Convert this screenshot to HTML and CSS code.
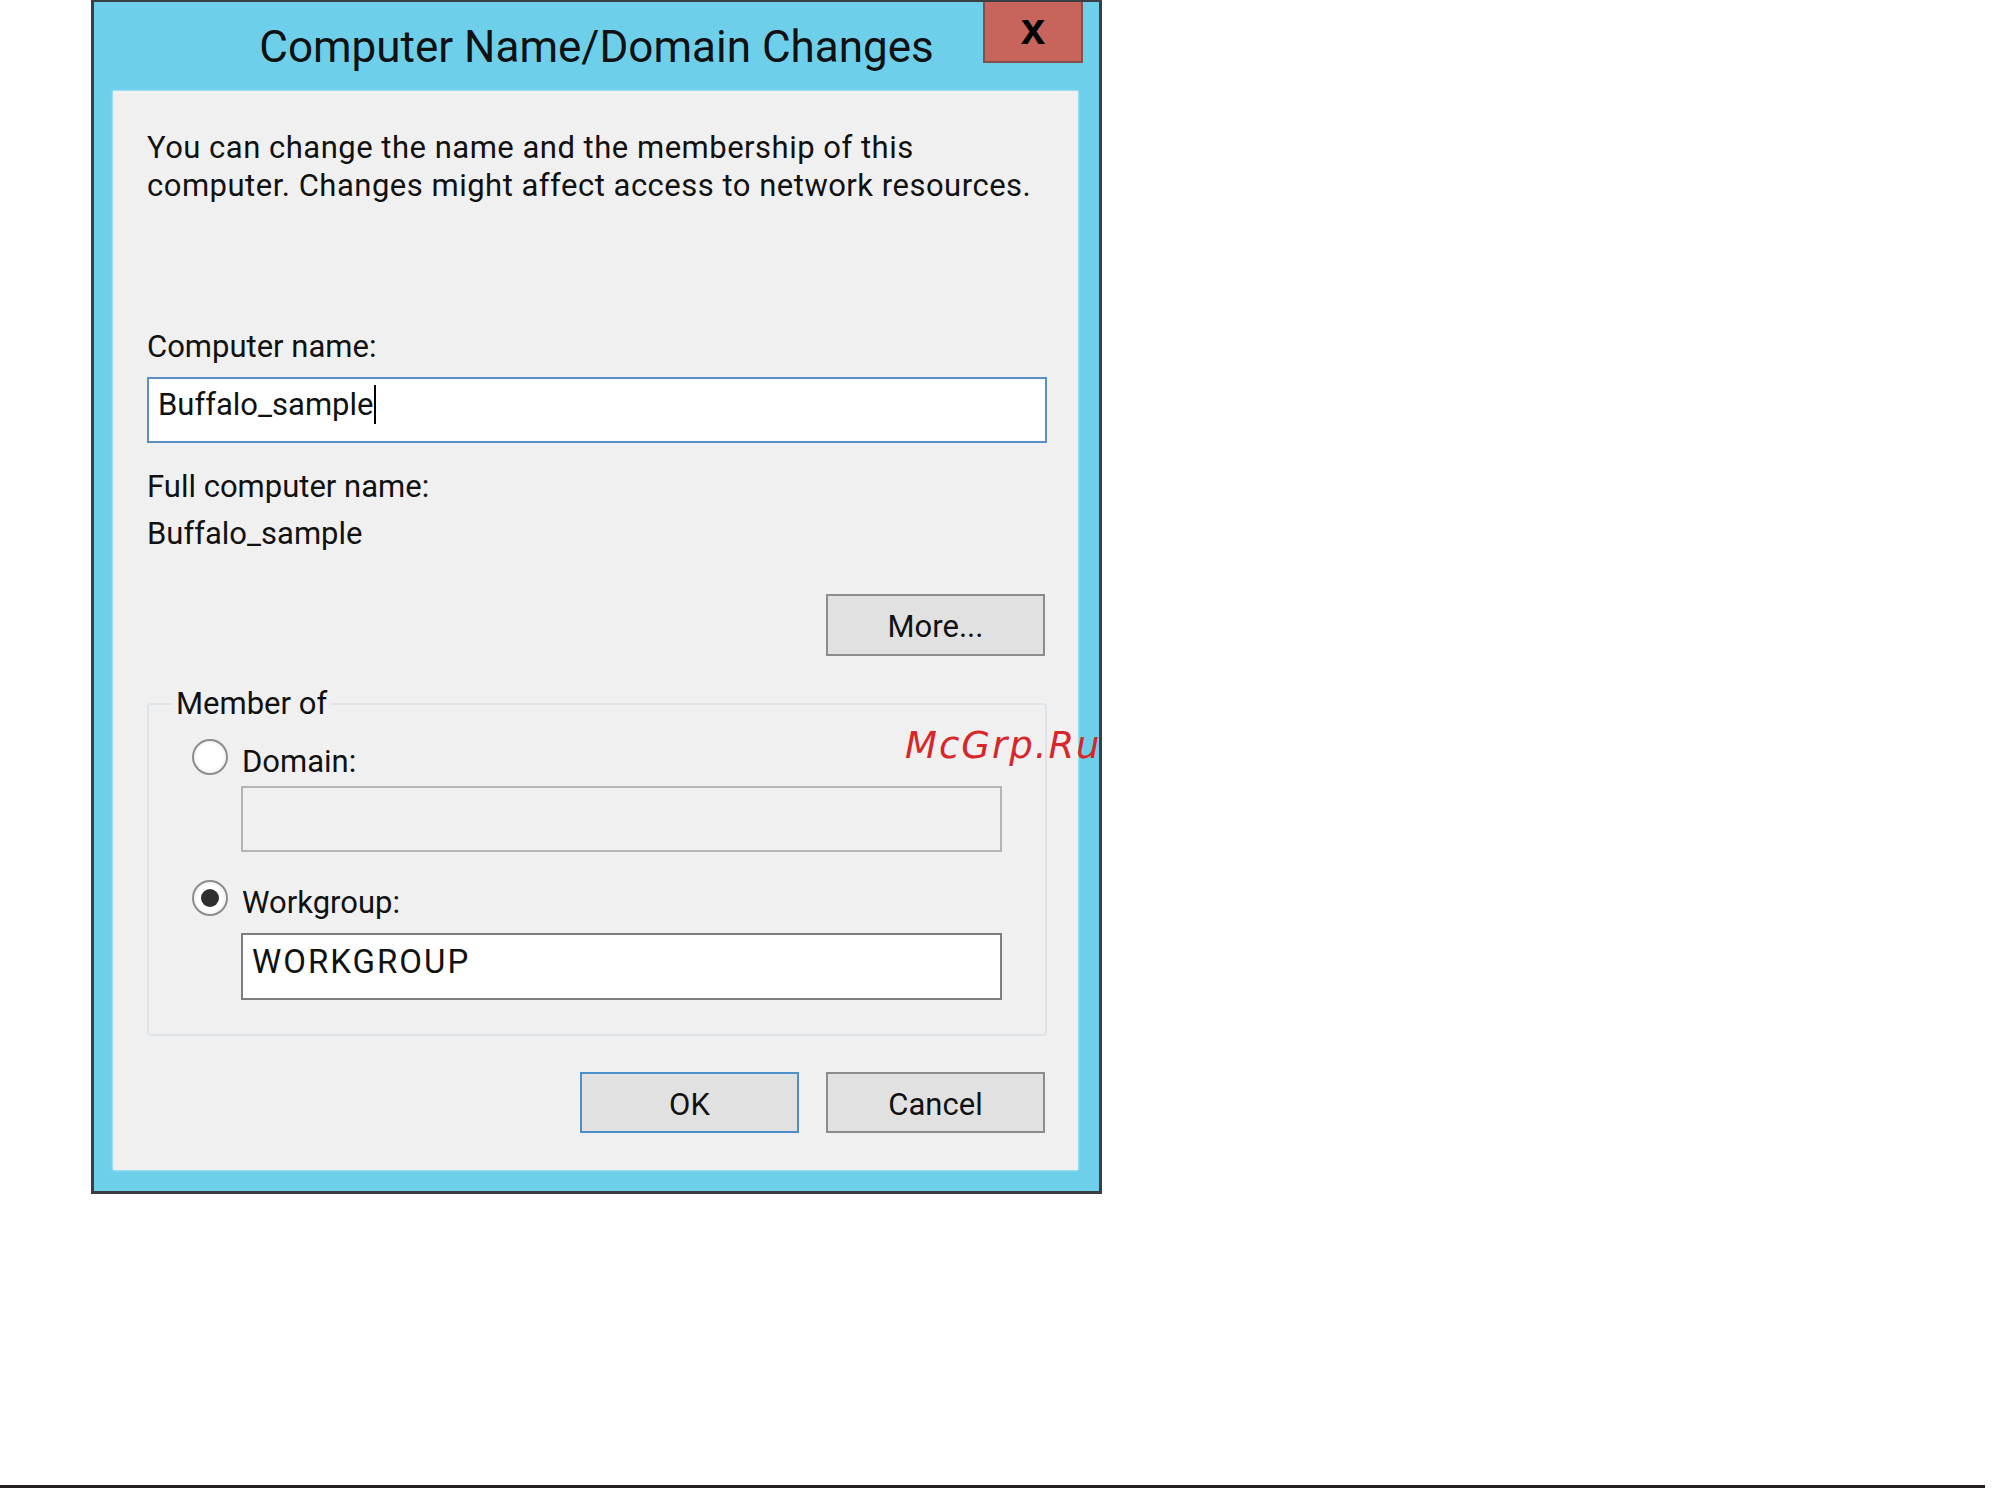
FILE: index.html
```html
<!DOCTYPE html>
<html lang="en">
<head>
    <meta charset="UTF-8">
    <meta name="viewport" content="width=device-width, initial-scale=1.0">
    <title>Computer Name/Domain Changes</title>
    <link rel="stylesheet" href="styles.css">
</head>
<body>
    <div class="page">
        <div class="dialog">
            <div class="titlebar">
                <span></span>
                <h1 class="title">Computer Name/Domain Changes</h1>
                <button class="close-btn" type="button">x</button>
            </div>

            <div class="panel">
                <p class="intro">You can change the name and the membership of this<br>computer. Changes might affect access to network resources.</p>

                <label class="field-label" for="computerName">Computer name:</label>
                <div class="textbox focused" id="computerName">Buffalo_sample<span class="caret"></span></div>

                <p class="field-label full-label">Full computer name:</p>
                <p class="full-name">Buffalo_sample</p>

                <div class="more-row">
                    <button class="btn" type="button">More...</button>
                </div>

                <fieldset class="group">
                    <legend>Member of</legend>
                    <div class="radio-row"><span class="radio"></span>Domain:</div>
                    <div class="textbox disabled indent"></div>
                    <div class="radio-row workgroup-row"><span class="radio checked"></span>Workgroup:</div>
                    <div class="textbox indent workgroup-box">WORKGROUP</div>
                </fieldset>

                <div class="actions">
                    <button class="btn default" type="button">OK</button>
                    <button class="btn" type="button">Cancel</button>
                </div>
            </div>

            <div class="watermark">McGrp.Ru</div>
        </div>
    </div>
    <div class="rule"></div>
</body>
</html>
```

FILE: styles.css
```css
* {
    margin: 0;
    padding: 0;
    box-sizing: border-box;
}

body {
    font-family: Roboto, 'Liberation Sans', sans-serif;
    font-size: 31px;
    line-height: 38px;
    color: #111;
    background: #fff;
}

.page {
    padding-left: 91px;
}

/* window frame */
.dialog {
    position: relative;
    width: 1011px;
    background: #6ecfeb;
    border: 3px solid #3b3e43;
    border-top-width: 2px;
    overflow: hidden;
}

.titlebar {
    display: grid;
    grid-template-columns: 1fr auto 1fr;
    height: 89px;
}

.title {
    grid-column: 2;
    font-size: 44px;
    font-weight: 400;
    line-height: 87px;
    padding-top: 2px;
    color: #111;
    white-space: nowrap;
}

.close-btn {
    grid-column: 3;
    justify-self: end;
    align-self: start;
    width: 100px;
    height: 61px;
    margin-right: 16px;
    padding-bottom: 5px;
    background: #c7645b;
    border: 2px solid #81504b;
    border-top: none;
    font-family: 'Liberation Sans', Arial, sans-serif;
    font-size: 44px;
    font-weight: 700;
    line-height: 48px;
    color: #000;
}

/* client area */
.panel {
    margin: 0 21px 21px 19px;
    padding: 38px 31px 37px 34px;
    background: #f0f0f0;
    box-shadow: 0 0 2px rgba(255, 255, 255, 0.9);
}

.intro {
    letter-spacing: 0.5px;
}

.field-label {
    display: block;
    margin-top: 123px;
}

.full-label {
    margin-top: 25px;
}

.full-name {
    margin-top: 9px;
}

.textbox {
    height: 66px;
    margin-top: 11px;
    padding-left: 9px;
    border: 2px solid #7d7d7d;
    background: #fff;
    line-height: 51px;
    white-space: nowrap;
}

.textbox.focused {
    border-color: #5a8fc5;
}

.textbox.disabled {
    border-color: #b4b4b4;
    background: #f0f0f0;
}

.caret {
    display: inline-block;
    width: 2px;
    height: 39px;
    margin-left: 1px;
    background: #000;
    vertical-align: -9px;
}

.more-row {
    display: flex;
    justify-content: flex-end;
    margin-top: 41px;
}

.btn {
    width: 219px;
    height: 62px;
    margin-right: 2px;
    padding-top: 4px;
    background: #e1e1e1;
    border: 2px solid #8c8c8c;
    font-family: inherit;
    font-size: 31px;
    line-height: 54px;
    color: #111;
}

.btn.default {
    border-color: #4d8fcb;
}

/* member of group box */
.group {
    margin-top: 29px;
    padding: 0 0 34px;
    border: 2px solid #dce4ea;
    border-radius: 4px;
    min-inline-size: 0;
}

.group legend {
    margin-left: 23px;
    padding: 0 4px;
}

.radio-row {
    display: flex;
    align-items: center;
    margin-top: 16px;
}

.workgroup-row {
    margin-top: 28px;
}

.radio {
    display: inline-flex;
    align-items: center;
    justify-content: center;
    width: 36px;
    height: 36px;
    margin: 0 14px 9px 43px;
    border: 2px solid #8d8d8d;
    border-radius: 50%;
    background: radial-gradient(circle, #fff 55%, #ececec 100%);
    box-shadow: inset 0 0 0 2px #f6f6f6;
}

.radio.checked::after {
    content: '';
    width: 18px;
    height: 18px;
    border-radius: 50%;
    background: #2f2f2f;
}

.indent {
    width: 761px;
    margin-left: 92px;
}

.group .textbox.disabled {
    margin-top: 2px;
}

.workgroup-box {
    height: 67px;
    margin-top: 8px;
    font-size: 33px;
    letter-spacing: 2px;
    line-height: 53px;
}

.actions {
    display: flex;
    justify-content: flex-end;
    gap: 25px;
    margin-top: 36px;
}

.actions .btn {
    height: 61px;
}

.watermark {
    position: absolute;
    top: 725px;
    left: 811px;
    font-family: 'DejaVu Sans', sans-serif;
    font-style: italic;
    font-size: 37px;
    letter-spacing: 2px;
    line-height: 1;
    color: #d8262a;
    white-space: nowrap;
}

.rule {
    width: 1985px;
    height: 3px;
    margin-top: 291px;
    background: #231f20;
}
```
